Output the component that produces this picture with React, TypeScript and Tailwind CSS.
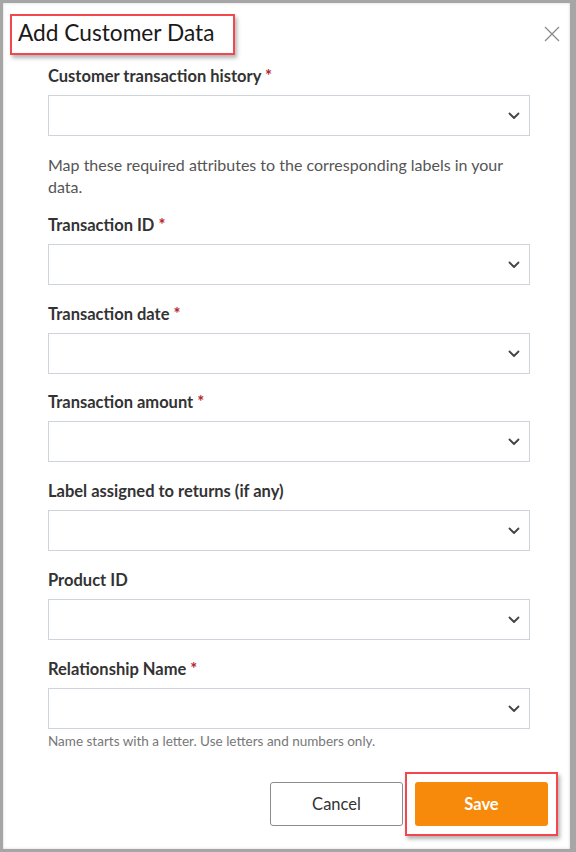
import React from "react";

const font = { fontFamily: "Lato, 'Open Sans', sans-serif" };

function Chevron() {
  return (
    <svg width="12" height="8" viewBox="0 0 12 8" className="absolute right-[8px] top-1/2 -translate-y-1/2 mr-[1px]">
      <path d="M1.5 1.5 L6 6 L10.5 1.5" fill="none" stroke="#444" strokeWidth="1.8" strokeLinecap="round" strokeLinejoin="round" />
    </svg>
  );
}

function Select() {
  return (
    <div className="relative h-[41px] w-full border border-[#cfd3dc] bg-white">
      <Chevron />
    </div>
  );
}

function Label({ text, required }: { text: string; required?: boolean }) {
  return (
    <div className="text-[16.5px] leading-[20px] font-bold text-[#333] mb-[9px]">
      {text}
      {required && <span className="text-[#b4252c]"> *</span>}
    </div>
  );
}

function Field({ text, required, className }: { text: string; required?: boolean; className?: string }) {
  return (
    <div className={className}>
      <Label text={text} required={required} />
      <Select />
    </div>
  );
}

export default function App() {
  return (
    <div className="w-[576px] h-[852px] bg-[#a6a6a6] pt-[3px] pl-[3px] pr-[6px] pb-[3px]" style={font}>
      <div className="relative h-full w-full bg-white shadow-[inset_0_0_3px_rgba(0,0,0,0.18)] flex flex-col">
        <div className="pl-[7px] pt-[11px] flex">
          <div className="border-2 border-[#f2474d] shadow-[2px_3px_4px_rgba(0,0,0,0.3)] w-[225px] h-[41px] pl-[6px] pb-[4px] flex items-center">
            <span className="text-[22.7px] leading-[28px] text-[#1a1a1a]">Add Customer Data</span>
          </div>
        </div>
        <button className="absolute right-[10px] top-[23px] w-[16px] h-[16px]">
          <svg width="16" height="16" viewBox="0 0 16 16">
            <path d="M1 1 L15 15 M15 1 L1 15" stroke="#8a8a8a" strokeWidth="1.3" />
          </svg>
        </button>
        <div className="pl-[45px] pr-[40px] pt-[11px] flex flex-col">
          <Field text="Customer transaction history" required />
          <p className="mt-[18px] text-[16px] leading-[22px] text-[#555]">
            Map these required attributes to the corresponding labels in your data.
          </p>
          <Field className="mt-[17px]" text="Transaction ID" required />
          <Field className="mt-[19px]" text="Transaction date" required />
          <Field className="mt-[18px]" text="Transaction amount" required />
          <Field className="mt-[19px]" text="Label assigned to returns (if any)" />
          <Field className="mt-[19px]" text="Product ID" />
          <Field className="mt-[19px]" text="Relationship Name" required />
          <div className="mt-[4px] text-[13.5px] leading-[16px] text-[#777]">
            Name starts with a letter. Use letters and numbers only.
          </div>
        </div>
        <div className="mt-[33px] flex justify-end pr-[22px] gap-[12px]">
          <button className="w-[133px] h-[44px] border border-[#8c8c8c] rounded-[3px] text-[16.5px] text-[#333] bg-white">
            Cancel
          </button>
          <div className="-m-[10px] p-[8px] border-2 border-[#f2474d] shadow-[2px_3px_4px_rgba(0,0,0,0.3)]">
            <button className="w-[133px] h-[44px] rounded-[3px] text-[16.5px] font-bold text-white bg-[#f78a0a]">
              Save
            </button>
          </div>
        </div>
      </div>
    </div>
  );
}
